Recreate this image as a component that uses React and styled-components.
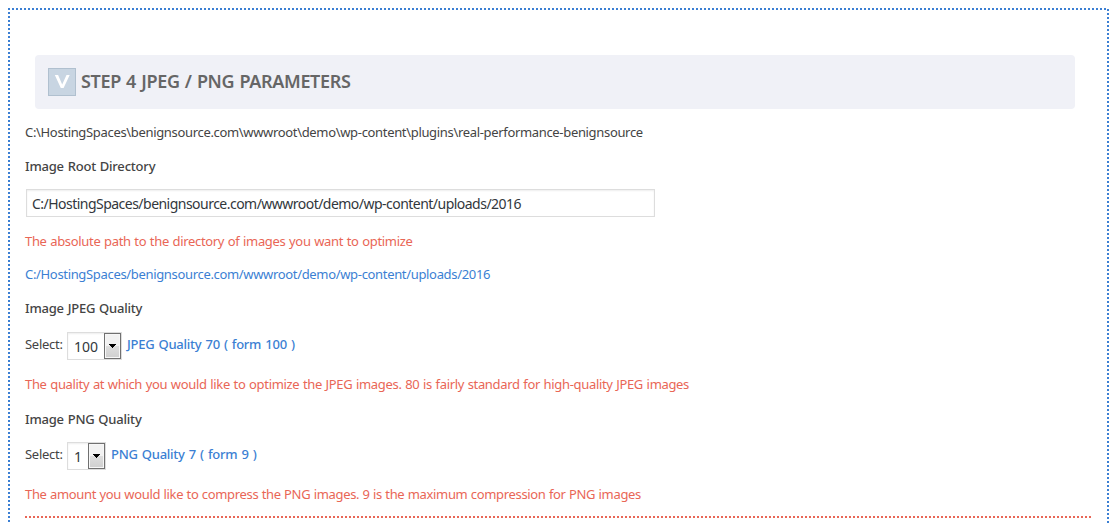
import React from "react";
import styled, { createGlobalStyle } from "styled-components";

const GlobalStyle = createGlobalStyle`
  * { box-sizing: border-box; }
  html, body { margin: 0; background: #fff; overflow: hidden; }
  body { font-family: "Noto Sans", "Open Sans", sans-serif; font-size: 13px; color: #444; }
`;

const blue = "#3b7fd3";
const red = "#e96656";
const dots = (dir, c) => `repeating-linear-gradient(${dir}, ${c} 0 2px, transparent 2px 4px)`;

const Panel = styled.main`
  width: 1101px;
  height: 516px;
  margin: 8px 0 0 8px;
  padding: 47px 18px 0 17px;
  display: flex;
  flex-direction: column;
  background-image: ${dots("to right", blue)}, ${dots("to bottom", blue)}, ${dots("to bottom", blue)};
  background-size: 1098px 2px, 2px 100%, 2px 100%;
  background-position: 0 0, 0 0, 1099px 1px;
  background-repeat: no-repeat;
`;

const Header = styled.header`
  height: 54px;
  margin: 0 16px 0 10px;
  padding: 0 13px;
  flex: none;
  display: flex;
  align-items: center;
  gap: 5px;
  border-radius: 4px;
  background: #f0f1f7;
`;

const Badge = styled.svg`
  width: 28px;
  height: 28px;
  flex: none;
`;

const Title = styled.h1`
  margin: 0;
  padding-bottom: 2px;
  font-size: 18px;
  line-height: 24px;
  font-weight: 600;
  color: #666;
  white-space: nowrap;
  letter-spacing: -0.35px;
  word-spacing: 0.9px;
`;

const Line = styled.p`
  margin: ${(p) => p.$top}px 0 0;
  height: 20px;
  line-height: 20px;
  flex: none;
  white-space: nowrap;
  color: ${(p) => p.$color || "#444"};
  letter-spacing: -0.33px;
  word-spacing: ${(p) => p.$ws ?? 0.57}px;
`;

const Label = styled(Line)`
  font-weight: 500;
  letter-spacing: -0.2px;
  word-spacing: 0.6px;
`;

const PathInput = styled.input`
  width: 629px;
  height: 28px;
  margin: 13px 0 0 1px;
  padding: 1px 5px 0;
  flex: none;
  border: 1px solid #ddd;
  border-radius: 0;
  outline: none;
  background: #fff;
  box-shadow: inset 0 1px 2px rgba(0, 0, 0, 0.07);
  color: #32373c;
  font: 400 14px "Noto Sans", sans-serif;
  letter-spacing: -0.525px;
`;

const Field = styled.div`
  height: 28px;
  margin-top: ${(p) => p.$top}px;
  display: flex;
  flex: none;
  line-height: 24px;
  white-space: nowrap;
`;

const FieldLabel = styled.span`
  width: 42px;
  letter-spacing: -0.28px;
`;

const SelectBox = styled.div`
  width: ${(p) => p.$width}px;
  height: 28px;
  display: flex;
  justify-content: space-between;
  border: 1px solid #ddd;
  box-shadow: inset 0 1px 2px rgba(0, 0, 0, 0.07);
  padding-left: 6px;
  font-size: 14px;
  line-height: 28px;
  color: #32373c;
`;

const SelectButton = styled.span`
  width: 17px;
  height: 26px;
  display: flex;
  align-items: center;
  justify-content: center;
  border: 1px solid #707070;
  box-shadow: inset 0 0 0 1px #f7f7f7;
  background: linear-gradient(#f2f2f2 0 48%, #dedede 50%, #cfcfcf);
`;

const FieldHint = styled.strong`
  margin-left: 5px;
  color: ${blue};
  font-weight: 500;
  letter-spacing: -0.25px;
  word-spacing: 0.95px;
`;

const Divider = styled.div`
  height: 2px;
  margin-top: 12px;
  width: 1066px;
  flex: none;
  background: ${dots("to right", red)};
`;

const Select = ({ value, width }) => (
  <SelectBox $width={width}>
    {value}
    <SelectButton>
      <svg width="7" height="4" viewBox="0 0 7 4" shapeRendering="crispEdges">
        <path d="M0 0H7V1H6V2H5V3H4V4H3V3H2V2H1V1H0Z" fill="#000" />
      </svg>
    </SelectButton>
  </SelectBox>
);

export default function App() {
  return (
    <>
      <GlobalStyle />
      <Panel>
        <Header>
          <Badge viewBox="0 0 28 28">
            <rect x="0.5" y="0.5" width="27" height="27" fill="#c8d5e2" stroke="#b0c0cf" />
            <path d="M6.8 7H10.1L14.2 16.6L18.5 7H21.7L15.6 20H12.8Z" fill="#fff" />
          </Badge>
          <Title>STEP 4 JPEG / PNG PARAMETERS</Title>
        </Header>
        <Line $top={13}>C:\HostingSpaces\benignsource.com\wwwroot\demo\wp-content\plugins\real-performance-benignsource</Line>
        <Label $top={14}>Image Root Directory</Label>
        <PathInput defaultValue="C:/HostingSpaces/benignsource.com/wwwroot/demo/wp-content/uploads/2016" />
        <Line $top={14} $color={red}>The absolute path to the directory of images you want to optimize</Line>
        <Line $top={13} $color={blue}>C:/HostingSpaces/benignsource.com/wwwroot/demo/wp-content/uploads/2016</Line>
        <Label $top={14}>Image JPEG Quality</Label>
        <Field $top={14}>
          <FieldLabel>Select:</FieldLabel>
          <Select value="100" width={55} />
          <FieldHint>JPEG Quality 70 ( form 100 )</FieldHint>
        </Field>
        <Line $top={14} $color={red}>The quality at which you would like to optimize the JPEG images. 80 is fairly standard for high-quality JPEG images</Line>
        <Label $top={15}>Image PNG Quality</Label>
        <Field $top={13}>
          <FieldLabel>Select:</FieldLabel>
          <Select value="1" width={39} />
          <FieldHint>PNG Quality 7 ( form 9 )</FieldHint>
        </Field>
        <Line $top={14} $color={red} $ws={0.31}>The amount you would like to compress the PNG images. 9 is the maximum compression for PNG images</Line>
        <Divider />
      </Panel>
    </>
  );
}
